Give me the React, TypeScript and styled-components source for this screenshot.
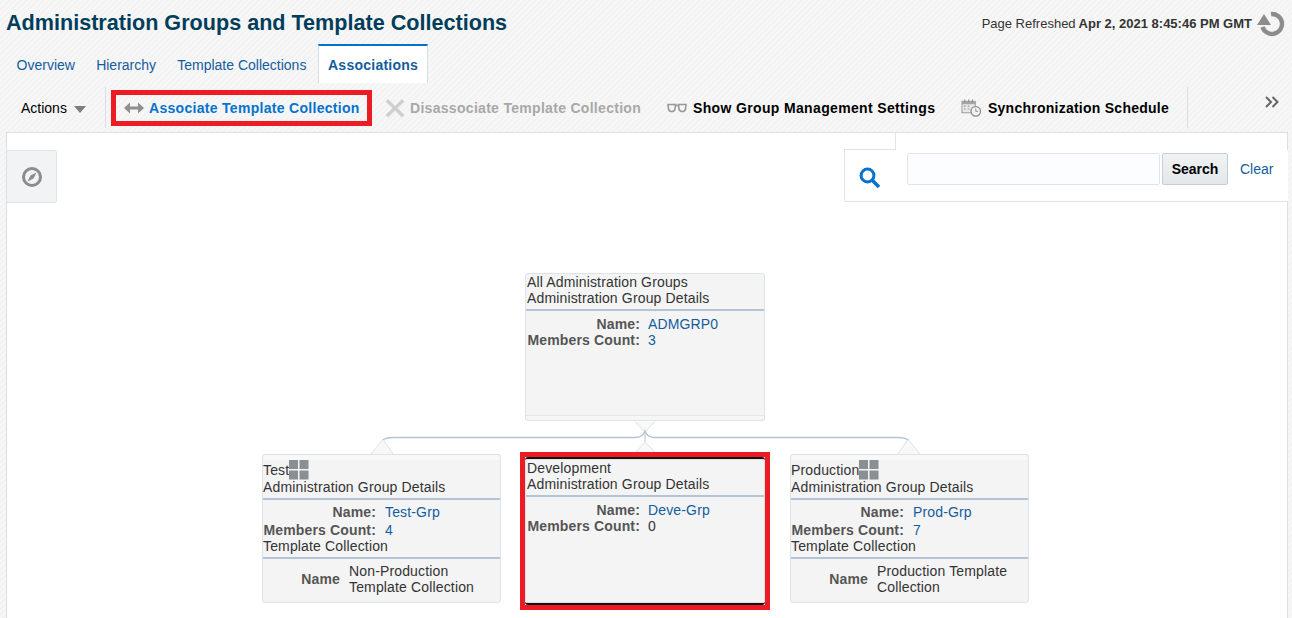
import React from 'react';
import styled, { createGlobalStyle } from 'styled-components';

const GlobalStyle = createGlobalStyle`
  html, body { margin: 0; padding: 0; background: #f6f6f6; }
  body { font-family: "Liberation Sans", Arial, sans-serif; }
`;

const Page = styled.div`
  width: 1292px;
  height: 618px;
  overflow: hidden;
  display: flex;
  flex-direction: column;
  background: repeating-linear-gradient(135deg, #f7f7f7 0, #f7f7f7 2px, #f3f3f3 2px, #f3f3f3 4px);
`;

const Header = styled.div`
  height: 44px;
  flex: none;
  display: flex;
  justify-content: space-between;
  padding: 0 7px 0 6px;
`;

const Title = styled.h1`
  margin: 10px 0 0;
  font-size: 21.6px;
  line-height: 26px;
  font-weight: bold;
  color: #003d5b;
`;

const Refresh = styled.div`
  display: flex;
  align-items: flex-start;
  gap: 5px;
  padding-top: 10px;
  font-size: 13px;
  line-height: 28px;
  color: #333;
  b { margin-left: 3px; }
`;

const Tabs = styled.div`
  height: 39px;
  flex: none;
  display: flex;
  padding-left: 6px;
`;

const Tab = styled.div<{ $active?: boolean }>`
  display: flex;
  align-items: center;
  margin-left: ${p => (p.$active ? '1px' : '0')};
  padding: ${p => (p.$active ? '0 9px' : '2px 10.6px 0')};
  font-size: 14px;
  font-weight: ${p => (p.$active ? 'bold' : 'normal')};
  color: #145c9e;
  background: ${p => (p.$active ? '#fff' : 'transparent')};
  border-top: ${p => (p.$active ? '2px solid #0572ce' : 'none')};
  border-left: ${p => (p.$active ? '1px solid #d6dfe6' : 'none')};
  border-right: ${p => (p.$active ? '1px solid #d6dfe6' : 'none')};
  letter-spacing: ${p => (p.$active ? '0.25px' : '0')};
`;

const Toolbar = styled.div`
  height: 49px;
  flex: none;
  display: flex;
  align-items: center;
  padding-bottom: 4px;
  box-sizing: border-box;
  position: relative;
`;

const ActionsMenu = styled.div`
  width: 106px;
  height: 41px;
  box-sizing: border-box;
  border-right: 1px solid #d6dfe6;
  display: flex;
  align-items: center;
  padding-left: 21px;
  gap: 7px;
  font-size: 14px;
  color: #000;
  margin-top: 4px;
`;

const Caret = styled.i`
  width: 0;
  height: 0;
  margin-top: 3px;
  border-left: 6px solid transparent;
  border-right: 6px solid transparent;
  border-top: 7px solid #7d7d7d;
`;

const ToolButton = styled.div<{
  $tone: 'blue' | 'grey' | 'black';
  $width: number;
  $offset?: number;
  $gap?: number;
  $spacing?: number;
  $boxed?: boolean;
}>`
  width: ${p => p.$width}px;
  height: 36px;
  flex: none;
  box-sizing: border-box;
  margin: 4px 0 0 ${p => p.$offset ?? 0}px;
  display: flex;
  align-items: center;
  gap: ${p => p.$gap ?? 5}px;
  font-size: 14px;
  font-weight: bold;
  letter-spacing: ${p => p.$spacing ?? 0.3}px;
  white-space: nowrap;
  color: ${p => (p.$tone === 'blue' ? '#0572ce' : p.$tone === 'grey' ? '#a8a8a8' : '#000')};
  border: ${p => (p.$boxed ? '5px solid #ed1c24' : 'none')};
  padding-left: ${p => (p.$boxed ? '8px' : '0')};
`;

const ToolDivider = styled.div`
  width: 1px;
  height: 41px;
  margin: 4px 0 0 18px;
  flex: none;
  background: #d6dfe6;
`;

const Overflow = styled.div`
  position: absolute;
  right: 13px;
  top: 11px;
`;

const Canvas = styled.div`
  position: relative;
  flex: 1;
  margin: 0 4px 0 6px;
  background: #fff;
  border: 1px solid #d9e0e6;
  border-bottom: none;
`;

const NavTab = styled.div`
  position: absolute;
  left: 0;
  top: 17px;
  width: 49px;
  height: 51px;
  display: flex;
  align-items: center;
  justify-content: center;
  background: #f2f3f4;
  border: 1px solid #dfe4e8;
  border-left: none;
  border-radius: 0 3px 3px 0;
`;

const SearchPanel = styled.div`
  position: absolute;
  right: -1px;
  top: 17px;
  width: 444px;
  height: 52px;
  box-sizing: border-box;
  background: #fff;
  border: 1px solid #dfe4e8;
  border-top: none;
  border-right: none;
  border-radius: 0 0 0 3px;
  display: flex;
  align-items: flex-start;
  padding: 3px 13px 0 14px;
  &::before {
    content: '';
    position: absolute;
    left: -1px;
    top: -18px;
    width: 52px;
    height: 18px;
    box-sizing: border-box;
    border-right: 1px solid #dfe4e8;
    border-bottom: 1px solid #dfe4e8;
    border-radius: 3px 0 0 0;
  }
  > svg { margin-top: 14px; }
`;

const SearchInput = styled.div`
  width: 253px;
  height: 32px;
  margin-left: 26px;
  box-sizing: border-box;
  background: #fcfdfe;
  border: 1px solid #dfe4e8;
  border-radius: 2px;
`;

const SearchButton = styled.div`
  width: 66px;
  height: 32px;
  margin-left: 2px;
  box-sizing: border-box;
  display: flex;
  align-items: center;
  justify-content: center;
  font-size: 14px;
  font-weight: bold;
  color: #000;
  background: linear-gradient(#f0f2f4, #e4e8ea);
  border: 1px solid #c4ced7;
  border-radius: 2px;
`;

const ClearLink = styled.span`
  margin-left: 12px;
  font-size: 14px;
  line-height: 32px;
  color: #145c9e;
`;

const Links = styled.svg`
  position: absolute;
  left: 0;
  top: 0;
  pointer-events: none;
`;

const Node = styled.div<{ $x: number; $y: number; $w: number }>`
  position: absolute;
  left: ${p => p.$x}px;
  top: ${p => p.$y}px;
  width: ${p => p.$w}px;
  height: 144px;
  box-sizing: border-box;
  background: #f4f4f4;
  border: 1px solid #dde3e8;
  border-radius: 3px;
  font-size: 14px;
  line-height: 16px;
  letter-spacing: 0.15px;
  color: #333;
`;

const NodeFooter = styled.div`
  position: absolute;
  left: -1px;
  right: -1px;
  bottom: -5px;
  height: 6px;
  box-sizing: border-box;
  border: 1px solid #dde3e8;
  border-top-color: #e4e7ea;
  border-radius: 0 0 3px 3px;
  background: #f6f6f6;
`;

const NodeTopCap = styled.div`
  position: absolute;
  left: -1px;
  right: -1px;
  top: -6px;
  height: 6px;
  box-sizing: border-box;
  border: 1px solid #dde3e8;
  border-bottom: none;
  border-radius: 3px 3px 0 0;
  background: #f8f8f8;
`;

const HighlightFrame = styled.div`
  position: absolute;
  left: 513px;
  top: 319px;
  width: 250px;
  height: 158px;
  box-sizing: border-box;
  border: 5px solid #ed1c24;
  pointer-events: none;
  &::after {
    content: '';
    position: absolute;
    inset: 0;
    border-top: 2px solid #111;
    border-bottom: 2px solid #111;
    border-radius: 3px;
  }
`;

const NodeHead = styled.div<{ $tall?: boolean }>`
  padding: ${p => (p.$tall ? '1px 0 3px' : '0 0 3px 1px')};
  border-bottom: 2px solid #b3c4d6;
`;

const TitleLine = styled.div<{ $icon?: boolean }>`
  display: flex;
  align-items: center;
  height: ${p => (p.$icon ? '18px' : '16px')};
`;

const Props = styled.div<{ $tall?: boolean }>`
  display: grid;
  grid-template-columns: 113px 1fr;
  column-gap: ${p => (p.$tall ? '9px' : '8px')};
  padding: ${p => (p.$tall ? '3px 0 0' : '5px 0 0 1px')};
  line-height: ${p => (p.$tall ? '18px' : '16px')};
`;

const PropLabel = styled.div`
  font-weight: bold;
  color: #555;
  text-align: right;
  white-space: nowrap;
`;

const PropLink = styled.div`
  color: #145c9e;
`;

const PropValue = styled.div`
  color: #333;
`;

const SubTitle = styled.div`
  margin-top: -1px;
  padding-bottom: 3px;
  border-bottom: 2px solid #b3c4d6;
`;

const CollectionRow = styled.div`
  display: grid;
  grid-template-columns: 77px 1fr;
  column-gap: 9px;
  padding-top: 4px;
  align-items: center;
`;

const Grid = () => (
  <svg width="20" height="20" viewBox="0 0 20 20">
    <rect x="0" y="0" width="9" height="9" fill="#8a8f94" />
    <rect x="10.5" y="0" width="9" height="9" fill="#8a8f94" />
    <rect x="0" y="10.5" width="9" height="9" fill="#8a8f94" />
    <rect x="10.5" y="10.5" width="9" height="9" fill="#8a8f94" />
  </svg>
);

const RefreshIcon = () => (
  <svg width="28" height="28" viewBox="0 0 28 28">
    <path d="M14 4 A10 10 0 1 1 5.5 17" fill="none" stroke="#8c8c8c" strokeWidth="4.4" />
    <path d="M0 15 L7 4 L14 15 Z" fill="#8c8c8c" />
  </svg>
);

const SwapIcon = () => (
  <svg width="20" height="12" viewBox="0 0 20 12">
    <path d="M0 6 L6 0.5 V4.5 H14 V0.5 L20 6 L14 11.5 V7.5 H6 V11.5 Z" fill="#8f8f8f" />
  </svg>
);

const CrossIcon = () => (
  <svg width="20" height="20" viewBox="0 0 20 20">
    <path d="M3 1 L10 8 L17 1 L19.5 3.5 L12.5 10 L19.5 17 L17 19.5 L10 12.5 L3 19.5 L0.5 17 L7.5 10 L0.5 3.5 Z" fill="#cfcfcf" />
  </svg>
);

const GlassesIcon = () => (
  <svg width="20" height="10" viewBox="0 0 20 10">
    <path d="M1 1.5 H8.5 L8 6 Q7.5 8.5 4.7 8.5 Q2 8.5 1.5 6 Z M11.5 1.5 H19 L18.5 6 Q18 8.5 15.3 8.5 Q12.5 8.5 12 6 Z M8.5 2.5 H11.5" fill="none" stroke="#999" strokeWidth="1.6" />
  </svg>
);

const ScheduleIcon = () => (
  <svg width="22" height="20" viewBox="0 0 22 20">
    <rect x="1" y="3" width="14" height="12" fill="#e8e8e8" stroke="#9a9a9a" />
    <path d="M1 3 H15 V6 H1 Z" fill="#a5a5a5" />
    <path d="M4 1 V4 M8 1 V4 M12 1 V4" stroke="#8c8c8c" strokeWidth="1.2" />
    <path d="M3 8 H5 M7 8 H9 M3 11 H5 M7 11 H9" stroke="#a0a0a0" strokeWidth="1.2" />
    <circle cx="15.5" cy="13.5" r="5" fill="#f4f4f4" stroke="#8c8c8c" strokeWidth="1.4" />
    <path d="M15.5 10.5 V13.5 H18" fill="none" stroke="#8c8c8c" />
  </svg>
);

const ChevronsIcon = () => (
  <svg width="14" height="12" viewBox="0 0 14 12">
    <path d="M1 1 L6 6 L1 11 M7.5 1 L12.5 6 L7.5 11" fill="none" stroke="#666" strokeWidth="2" />
  </svg>
);

const CompassIcon = () => (
  <svg width="22" height="22" viewBox="0 0 22 22">
    <circle cx="11" cy="11" r="8.5" fill="none" stroke="#8c8c8c" strokeWidth="3" />
    <path d="M15.5 6.5 L12.5 12.5 L9.5 9.5 Z M6.5 15.5 L9.5 9.5 L12.5 12.5 Z" fill="#8c8c8c" />
  </svg>
);

const SearchIcon = () => (
  <svg width="22" height="22" viewBox="0 0 22 22">
    <circle cx="8.5" cy="8.5" r="6.4" fill="none" stroke="#0572ce" strokeWidth="3" />
    <path d="M13 13 L20 20" stroke="#0572ce" strokeWidth="3.6" />
  </svg>
);

const App: React.FC = () => (
  <Page>
    <GlobalStyle />
    <Header>
      <Title>Administration Groups and Template Collections</Title>
      <Refresh>
        <span>
          Page Refreshed<b>Apr 2, 2021 8:45:46 PM GMT</b>
        </span>
        <RefreshIcon />
      </Refresh>
    </Header>
    <Tabs>
      <Tab>Overview</Tab>
      <Tab>Hierarchy</Tab>
      <Tab>Template Collections</Tab>
      <Tab $active>Associations</Tab>
    </Tabs>
    <Toolbar>
      <ActionsMenu>
        Actions
        <Caret />
      </ActionsMenu>
      <ToolButton $tone="blue" $width={261} $offset={5} $boxed>
        <SwapIcon />
        Associate Template Collection
      </ToolButton>
      <ToolButton $tone="grey" $width={282} $offset={13}>
        <CrossIcon />
        Disassociate Template Collection
      </ToolButton>
      <ToolButton $tone="black" $width={294} $gap={6} $spacing={0.35}>
        <GlassesIcon />
        Show Group Management Settings
      </ToolButton>
      <ToolButton $tone="black" $width={208} $gap={6} $spacing={0.25}>
        <ScheduleIcon />
        Synchronization Schedule
      </ToolButton>
      <ToolDivider />
      <Overflow>
        <ChevronsIcon />
      </Overflow>
    </Toolbar>
    <Canvas>
      <NavTab>
        <CompassIcon />
      </NavTab>
      <SearchPanel>
        <SearchIcon />
        <SearchInput />
        <SearchButton>Search</SearchButton>
        <ClearLink>Clear</ClearLink>
      </SearchPanel>

      <Links width="1282" height="486">
        <g fill="#f8f8f8" stroke="#dde3e8">
          <path d="M628 288.5 L638 299 L648 288.5" />
          <path d="M629 319 L638 309 L648 319" />
          <path d="M364 321 L376 306 L386 321" />
          <path d="M891 321 L901 306 L913 321" />
        </g>
        <path
          d="M376 306.5 Q380 304.5 386 304.5 H628 Q636 304.5 638 298 Q640 304.5 648 304.5 H892 Q898 304.5 901 307"
          fill="none"
          stroke="#b3c4d6"
          strokeWidth="1.3"
        />
        <path d="M638 298 V309" stroke="#b3c4d6" strokeWidth="1" />
      </Links>

      <Node $x={518} $y={140} $w={240}>
        <NodeFooter />
        <NodeHead>
          <TitleLine>All Administration Groups</TitleLine>
          <TitleLine>Administration Group Details</TitleLine>
        </NodeHead>
        <Props>
          <PropLabel>Name:</PropLabel>
          <PropLink>ADMGRP0</PropLink>
          <PropLabel>Members Count:</PropLabel>
          <PropLink>3</PropLink>
        </Props>
      </Node>

      <Node $x={255} $y={326} $w={239}>
        <NodeTopCap />
        <NodeHead $tall>
          <TitleLine $icon>
            Test
            <Grid />
          </TitleLine>
          <TitleLine>Administration Group Details</TitleLine>
        </NodeHead>
        <Props $tall>
          <PropLabel>Name:</PropLabel>
          <PropLink>Test-Grp</PropLink>
          <PropLabel>Members Count:</PropLabel>
          <PropLink>4</PropLink>
        </Props>
        <SubTitle>Template Collection</SubTitle>
        <CollectionRow>
          <PropLabel>Name</PropLabel>
          <PropValue>
            Non-Production
            <br />
            Template Collection
          </PropValue>
        </CollectionRow>
      </Node>

      <Node $x={518} $y={326} $w={240}>
        <NodeHead>
          <TitleLine>Development</TitleLine>
          <TitleLine>Administration Group Details</TitleLine>
        </NodeHead>
        <Props>
          <PropLabel>Name:</PropLabel>
          <PropLink>Deve-Grp</PropLink>
          <PropLabel>Members Count:</PropLabel>
          <PropValue>0</PropValue>
        </Props>
      </Node>
      <HighlightFrame />

      <Node $x={783} $y={326} $w={239}>
        <NodeTopCap />
        <NodeHead $tall>
          <TitleLine $icon>
            Production
            <Grid />
          </TitleLine>
          <TitleLine>Administration Group Details</TitleLine>
        </NodeHead>
        <Props $tall>
          <PropLabel>Name:</PropLabel>
          <PropLink>Prod-Grp</PropLink>
          <PropLabel>Members Count:</PropLabel>
          <PropLink>7</PropLink>
        </Props>
        <SubTitle>Template Collection</SubTitle>
        <CollectionRow>
          <PropLabel>Name</PropLabel>
          <PropValue>
            Production Template
            <br />
            Collection
          </PropValue>
        </CollectionRow>
      </Node>
    </Canvas>
  </Page>
);

export default App;
